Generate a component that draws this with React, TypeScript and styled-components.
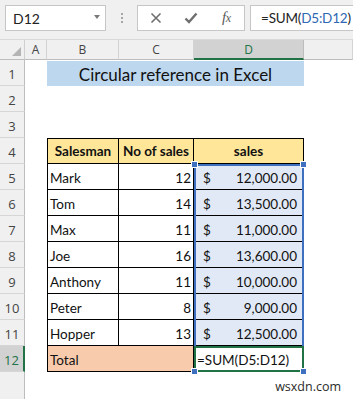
import React from "react";
import styled, { createGlobalStyle } from "styled-components";

const Global = createGlobalStyle`
  html, body { margin: 0; padding: 0; background: #ffffff; }
  body { width: 353px; height: 399px; overflow: hidden; font-family: Lato, "Liberation Sans", sans-serif; }
  * { box-sizing: border-box; }
`;

const CELL_FONT = `Lato, "Liberation Sans", sans-serif`;
const UI_FONT = `"Open Sans", "Liberation Sans", sans-serif`;
const GREEN = "#217346";
const BLUE = "#3f70c0";

const Page = styled.div`
  width: 353px;
  height: 399px;
  display: flex;
  flex-direction: column;
  overflow: hidden;
  background: #ffffff;
`;

const Toolbar = styled.div`
  height: 40px;
  flex: none;
  background: #f0f0f0;
  border-bottom: 1px solid #d8d8d8;
  display: flex;
  align-items: flex-start;
  padding: 5px 0 0 5px;
`;

const NameBox = styled.div`
  flex: none;
  width: 101px;
  height: 26px;
  background: #ffffff;
  border: 1px solid #c6c6c6;
  display: flex;
  align-items: center;
  justify-content: space-between;
  padding: 0 5px 0 7px;
  font: 14px ${CELL_FONT};
  color: #222222;
`;

const DropArrow = styled.span`
  width: 0;
  height: 0;
  border-left: 3.5px solid transparent;
  border-right: 3.5px solid transparent;
  border-top: 4px solid #7a7a7a;
  margin-top: -3px;
`;

const Grip = styled.div`
  flex: none;
  width: 31px;
  height: 26px;
  display: flex;
  flex-direction: column;
  align-items: center;
  justify-content: center;
  gap: 2px;
`;

const GripDot = styled.span`
  width: 2px;
  height: 2px;
  background: #a6a6a6;
`;

const FxGroup = styled.div`
  flex: none;
  width: 108px;
  height: 26px;
  background: #ffffff;
  border: 1px solid #c6c6c6;
  display: grid;
  grid-template-columns: repeat(3, 1fr);
  align-items: center;
  justify-items: center;
`;

const FxText = styled.span`
  font: italic 15px "Liberation Serif", serif;
  color: #5a5a5a;
  letter-spacing: -0.5px;
  margin-top: -1px;
`;

const FxSub = styled.span`
  font-size: 12px;
`;

const FormulaBox = styled.div`
  flex: 1;
  min-width: 0;
  overflow: hidden;
  height: 26px;
  margin-left: 5px;
  background: #ffffff;
  border: 1px solid #c6c6c6;
  border-right: none;
  display: flex;
  align-items: center;
  padding-left: 10px;
  font: 13.5px ${CELL_FONT};
  letter-spacing: -0.2px;
  color: #222222;
  white-space: nowrap;
`;

const RefText = styled.span`
  color: #2e69b3;
`;

const Sheet = styled.div`
  flex: 1;
  display: grid;
  grid-template-columns: 25px 22px 72px 75px 110px 1fr;
  grid-template-rows: 20px repeat(12, 26px) 1fr;
`;

const Corner = styled.div`
  background: #f0f0f0;
  border-right: 1px solid #cfcfcf;
  border-bottom: 1px solid #bdbdbd;
  display: flex;
  align-items: flex-end;
  justify-content: flex-end;
  padding: 0 3px 3px 0;
`;

const CornerTri = styled.span`
  width: 9px;
  height: 9px;
  background: #b4b4b4;
  clip-path: polygon(100% 0, 100% 100%, 0 100%);
`;

const ColHead = styled.div<{ $sel?: boolean }>`
  background: ${(p) => (p.$sel ? "#d2d2d2" : "#f0f0f0")};
  border-right: 1px solid ${(p) => (p.$sel ? "#bdbdbd" : "#d4d4d4")};
  border-bottom: ${(p) => (p.$sel ? `2px solid ${GREEN}` : "1px solid #bdbdbd")};
  color: ${(p) => (p.$sel ? GREEN : "#444444")};
  font: 12px ${UI_FONT};
  display: flex;
  align-items: center;
  justify-content: center;
`;

const RowHead = styled.div<{ $sel?: boolean; $last?: boolean }>`
  background: ${(p) => (p.$sel ? "#d2d2d2" : "#f0f0f0")};
  border-right: ${(p) => (p.$sel ? `2px solid ${GREEN}` : "1px solid #bdbdbd")};
  border-bottom: ${(p) => (p.$last ? "none" : "1px solid #d6d6d6")};
  color: ${(p) => (p.$sel ? GREEN : "#444444")};
  font: 13px ${UI_FONT};
  display: flex;
  align-items: flex-end;
  justify-content: center;
  padding-bottom: 2px;
`;

const Blank = styled.div``;

const Title = styled.div`
  grid-column: span 3;
  margin-top: 1px;
  background: #bdd7ee;
  display: flex;
  align-items: center;
  justify-content: center;
  font: 17px ${CELL_FONT};
  color: #111111;
  padding-top: 1px;
`;

const TCell = styled.div<{
  $bg?: string;
  $top?: boolean;
  $left?: boolean;
  $head?: boolean;
  $right?: boolean;
  $span?: number;
}>`
  grid-column: span ${(p) => p.$span ?? 1};
  background: ${(p) => p.$bg ?? "#ffffff"};
  border-right: 1px solid #000000;
  border-bottom: 1px solid #000000;
  border-top: ${(p) => (p.$top ? "1px solid #000000" : "none")};
  border-left: ${(p) => (p.$left ? "1px solid #000000" : "none")};
  font: ${(p) => (p.$head ? "bold" : "normal")} 13.5px ${CELL_FONT};
  color: #111111;
  display: flex;
  align-items: ${(p) => (p.$head ? "center" : "flex-end")};
  justify-content: ${(p) => (p.$head ? "center" : p.$right ? "flex-end" : "flex-start")};
  padding: ${(p) => (p.$head ? "0" : "0 2px 3px 2px")};
  white-space: nowrap;
`;

const MoneyCell = styled.div<{ $row: number }>`
  grid-column: 5;
  grid-row: ${(p) => p.$row};
  background: #e1e9f6;
  border-bottom: 1px solid #000000;
  font: 13.5px ${CELL_FONT};
  color: #111111;
  display: flex;
  align-items: flex-end;
  justify-content: space-between;
  padding: 0 7px 3px 9px;
  white-space: nowrap;
`;

const FormulaCell = styled.div`
  grid-column: 5;
  grid-row: 13;
  z-index: 2;
  background: #ffffff;
  border: 2px solid ${GREEN};
  font: 13.5px ${CELL_FONT};
  color: #111111;
  display: flex;
  align-items: flex-end;
  padding: 0 0 2px 1px;
  white-space: nowrap;
`;

const Selection = styled.div`
  grid-column: 5;
  grid-row: 6 / 14;
  z-index: 1;
  border: 2px solid ${BLUE};
  pointer-events: none;
`;

const HandleLayer = styled.div`
  grid-column: 5;
  grid-row: 6 / 14;
  z-index: 3;
  position: relative;
  pointer-events: none;
`;

const Handle = styled.span<{ $v: "top" | "bottom"; $h: "left" | "right" }>`
  position: absolute;
  width: 7px;
  height: 7px;
  background: ${BLUE};
  border: 1px solid #ffffff;
  ${(p) => p.$v}: -3px;
  ${(p) => p.$h}: -3px;
`;

const Filler = styled.div`
  grid-column: 2 / 7;
  display: flex;
  align-items: flex-end;
  justify-content: flex-end;
  padding: 0 12px 4px 0;
`;

const Watermark = styled.span`
  font: 12.5px ${UI_FONT};
  color: #2b2b2b;
`;

const data = [
  { name: "Mark", n: 12, v: "12,000.00" },
  { name: "Tom", n: 14, v: "13,500.00" },
  { name: "Max", n: 11, v: "11,000.00" },
  { name: "Joe", n: 16, v: "13,600.00" },
  { name: "Anthony", n: 11, v: "10,000.00" },
  { name: "Peter", n: 8, v: "9,000.00" },
  { name: "Hopper", n: 13, v: "12,500.00" },
];

const CloseIcon = () => (
  <svg width="12" height="12" viewBox="0 0 12 12">
    <path d="M1.5 1.5 L10.5 10.5 M10.5 1.5 L1.5 10.5" stroke="#6f6f6f" strokeWidth="1.6" fill="none" />
  </svg>
);

const CheckIcon = () => (
  <svg width="14" height="12" viewBox="0 0 14 12">
    <path d="M1.5 6.5 L5 10 L12.5 1.5" stroke="#6f6f6f" strokeWidth="2.4" fill="none" />
  </svg>
);

export default function App() {
  return (
    <Page>
      <Global />
      <Toolbar>
        <NameBox>
          D12
          <DropArrow />
        </NameBox>
        <Grip>
          <GripDot />
          <GripDot />
          <GripDot />
        </Grip>
        <FxGroup>
          <CloseIcon />
          <CheckIcon />
          <FxText>
            f<FxSub>x</FxSub>
          </FxText>
        </FxGroup>
        <FormulaBox>
          =SUM(<RefText>D5:D12</RefText>)
        </FormulaBox>
      </Toolbar>
      <Sheet>
        <Corner>
          <CornerTri />
        </Corner>
        <ColHead>A</ColHead>
        <ColHead>B</ColHead>
        <ColHead>C</ColHead>
        <ColHead $sel>D</ColHead>
        <ColHead />

        <RowHead>1</RowHead>
        <Blank />
        <Title>Circular reference in Excel</Title>
        <Blank />

        {[2, 3].map((r) => (
          <React.Fragment key={r}>
            <RowHead>{r}</RowHead>
            <Blank />
            <Blank />
            <Blank />
            <Blank />
            <Blank />
          </React.Fragment>
        ))}

        <RowHead>4</RowHead>
        <Blank />
        <TCell $bg="#ffe699" $top $left $head>
          Salesman
        </TCell>
        <TCell $bg="#ffe699" $top $head>
          No of sales
        </TCell>
        <TCell $bg="#ffe699" $top $head>
          sales
        </TCell>
        <Blank />

        {data.map((d, i) => (
          <React.Fragment key={d.name}>
            <RowHead>{i + 5}</RowHead>
            <Blank />
            <TCell $left>{d.name}</TCell>
            <TCell $right>{d.n}</TCell>
            <MoneyCell $row={i + 6}>
              <span>$</span>
              <span>{d.v}</span>
            </MoneyCell>
            <Blank />
          </React.Fragment>
        ))}

        <RowHead $sel>12</RowHead>
        <Blank />
        <TCell $bg="#f8cbad" $left $span={2}>
          Total
        </TCell>
        <FormulaCell>=SUM(D5:D12)</FormulaCell>
        <Blank />

        <RowHead $last />
        <Filler>
          <Watermark>wsxdn.com</Watermark>
        </Filler>

        <Selection />
        <HandleLayer>
          <Handle $v="top" $h="left" />
          <Handle $v="top" $h="right" />
          <Handle $v="bottom" $h="left" />
          <Handle $v="bottom" $h="right" />
        </HandleLayer>
      </Sheet>
    </Page>
  );
}
